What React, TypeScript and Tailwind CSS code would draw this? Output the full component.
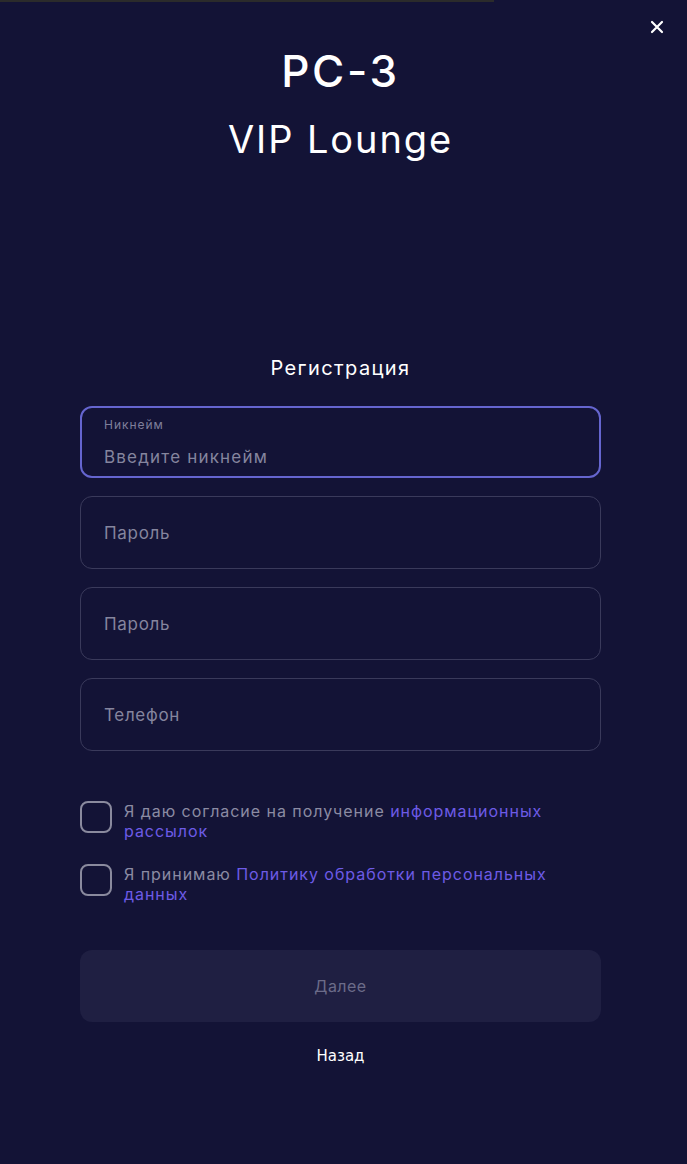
import { useState } from "react";

const fields = [
  { id: "password", placeholder: "Пароль", type: "password" },
  { id: "password2", placeholder: "Пароль", type: "password" },
  { id: "phone", placeholder: "Телефон", type: "tel" },
];

function CloseIcon() {
  return (
    <svg width="14" height="14" viewBox="0 0 14 14" fill="none" aria-hidden="true">
      <path d="M2 2L12 12M12 2L2 12" stroke="#ffffff" strokeWidth="2.2" strokeLinecap="round" />
    </svg>
  );
}

function Checkbox({ children }: { children: React.ReactNode }) {
  const [checked, setChecked] = useState(false);
  return (
    <div className="flex items-start gap-[12px]">
      <button
        type="button"
        onClick={() => setChecked(!checked)}
        className={`h-[32px] w-[32px] shrink-0 rounded-[8px] border-2 ${checked ? "border-[#6c5ce7] bg-[#6c5ce7]" : "border-[#8a8a9e]"}`}
      />
      <p className="w-[440px] text-[16px] leading-[20px] tracking-[0.06em] text-[#8b8ba3]">{children}</p>
    </div>
  );
}

export default function App() {
  return (
    <div className="relative min-h-[1164px] w-full bg-[#131336] font-['Inter','Noto_Sans',sans-serif] text-white">
      <div className="absolute left-0 top-0 h-[2px] w-[494px] bg-[#2b2b2b]" />
      <button type="button" className="absolute right-[19px] top-[16px] p-1" aria-label="Закрыть">
        <CloseIcon />
      </button>

      <div className="flex w-[681px] flex-col items-center pt-[49px]">
        <h1 className="text-[44px] leading-none font-medium tracking-[0.06em]">PC-3</h1>
        <h2 className="mt-[27px] text-[38px] leading-none font-normal tracking-[0.05em]">VIP Lounge</h2>

        <h3 className="mt-[200px] text-[20px] leading-none font-normal tracking-[0.07em]">Регистрация</h3>

        <form className="mt-[28px] flex w-[521px] flex-col">
          <div className="flex h-[72px] flex-col rounded-[12px] border-2 border-[#6565cf] px-[22px] pt-[10px]">
            <span className="text-[12px] leading-[14px] tracking-[0.08em] text-[#7f7f9b]">Никнейм</span>
            <input
              autoFocus
              placeholder="Введите никнейм"
              className="mt-[15px] bg-transparent text-[17px] leading-[20px] tracking-[0.07em] text-white outline-none placeholder:text-[#85859e]"
            />
          </div>
          {fields.map((f) => (
            <input
              key={f.id}
              type={f.type}
              placeholder={f.placeholder}
              className="mt-[18px] h-[73px] rounded-[12px] border border-[#3a3a5b] bg-transparent px-[23px] text-[17px] tracking-[0.04em] text-white outline-none placeholder:text-[#85859e]"
            />
          ))}

          <div className="mt-[50px] flex flex-col gap-[23px]">
            <Checkbox>
              Я даю согласие на получение <span className="text-[#6d5be6]">информационных рассылок</span>
            </Checkbox>
            <Checkbox>
              Я принимаю <span className="text-[#6d5be6]">Политику обработки персональных данных</span>
            </Checkbox>
          </div>

          <button
            type="button"
            disabled
            className="mt-[46px] h-[72px] rounded-[12px] bg-[#1f1f42] text-[16px] tracking-[0.03em] text-[#6b6b89]"
          >
            Далее
          </button>
          <button
            type="button"
            className="mt-[24px] self-center font-['DejaVu_Sans',sans-serif] text-[15px] leading-[20px] text-white"
          >
            Назад
          </button>
        </form>
      </div>
    </div>
  );
}
